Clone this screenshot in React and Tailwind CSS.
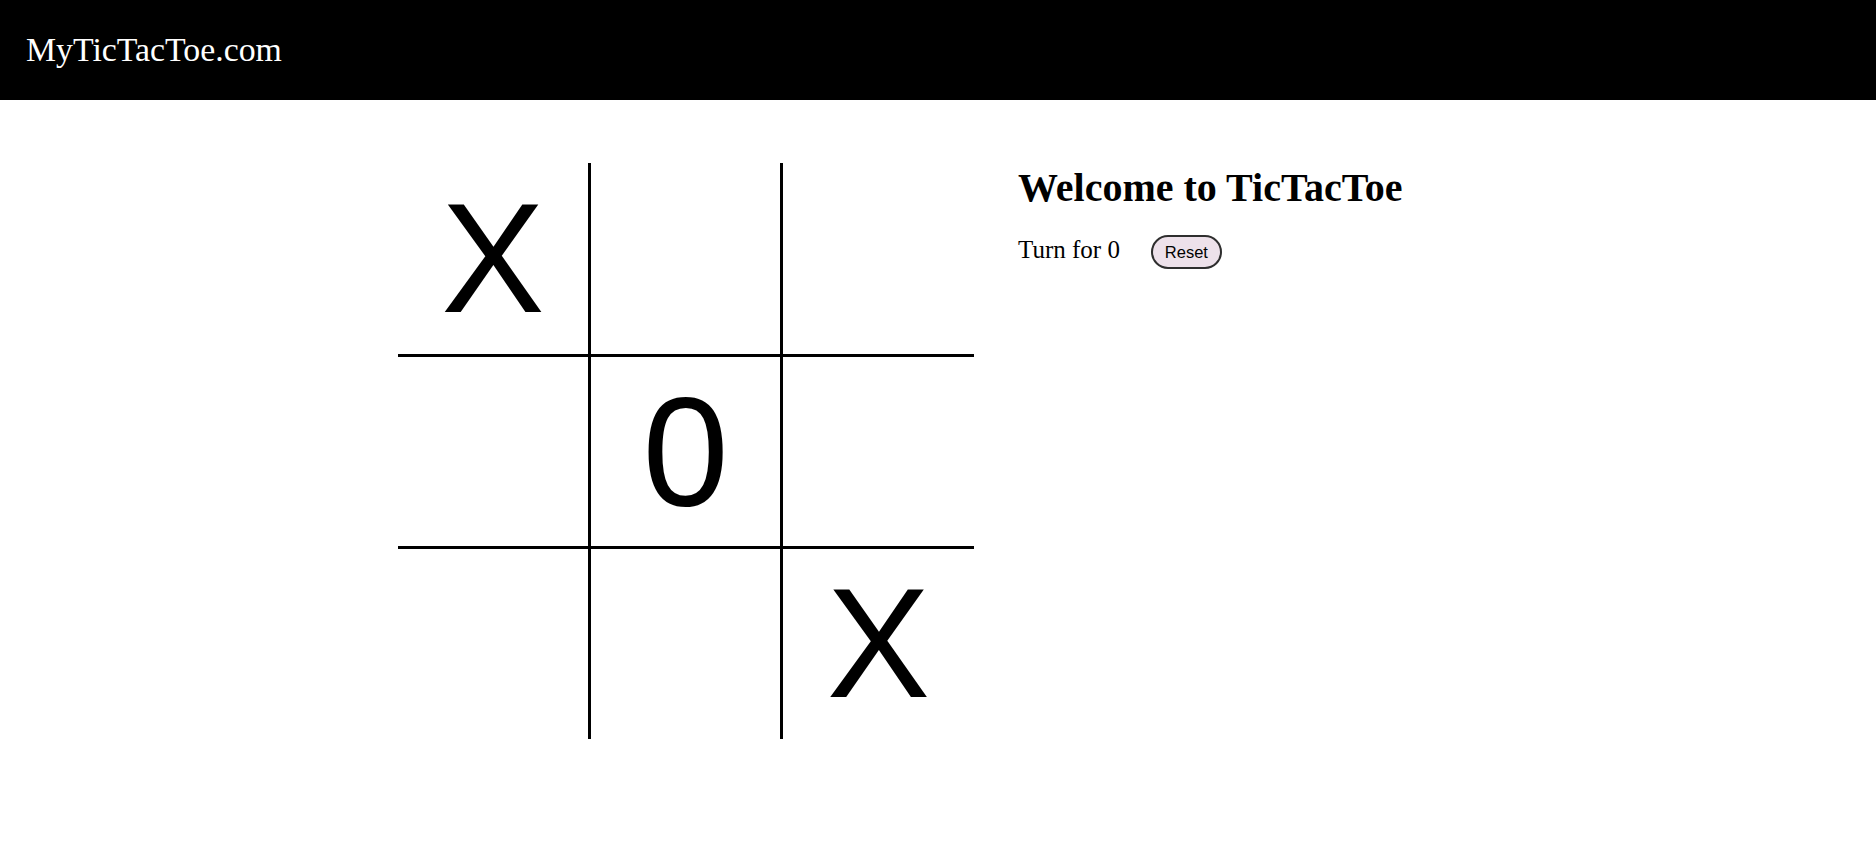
import { useState } from 'react';

const serif = "font-['Liberation_Serif','Times_New_Roman',serif]";
const sans = "font-['Liberation_Sans',Arial,sans-serif]";

const start = ['X', '', '', '', '0', '', '', '', 'X'];

// borders per cell: inner lines only
const cellBorder = [
  'border-r-[3px] border-b-[3px]',
  'border-r-[3px] border-b-[3px]',
  'border-b-[3px]',
  'border-r-[3px] border-b-[3px]',
  'border-r-[3px] border-b-[3px]',
  'border-b-[3px]',
  'border-r-[3px]',
  'border-r-[3px]',
  '',
];

export default function App() {
  const [cells, setCells] = useState(start);
  const [turn, setTurn] = useState('0');

  const play = (i) => {
    if (cells[i]) return;
    const next = [...cells];
    next[i] = turn;
    setCells(next);
    setTurn(turn === 'X' ? '0' : 'X');
  };

  const reset = () => {
    setCells(Array(9).fill(''));
    setTurn('X');
  };

  return (
    <div className="min-h-screen bg-white text-black">
      {/* Top bar */}
      <header className="h-[100px] bg-black flex items-center pl-[26px]">
        <span className={`${serif} text-[33.8px] text-white leading-[normal]`}>MyTicTacToe.com</span>
      </header>

      <main className="flex pl-[398px] pt-[63px] gap-[44px]">
        {/* Board */}
        <div className="grid grid-cols-[193px_192px_191px] grid-rows-[194px_192px_190px] shrink-0">
          {cells.map((v, i) => (
            <div
              key={i}
              onClick={() => play(i)}
              className={`${cellBorder[i]} border-black flex items-center justify-center cursor-pointer ${sans} text-[155px] leading-[normal]`}
            >
              {v}
            </div>
          ))}
        </div>

        {/* Side panel */}
        <div className="pt-[3px]">
          <h1 className={`${serif} text-[40px] font-bold leading-[43px]`}>Welcome to TicTacToe</h1>
          <div className="flex items-start mt-[26px] gap-[31px]">
            <span className={`${serif} text-[25px] leading-[30px]`}>Turn for {turn}</span>
            <button
              onClick={reset}
              className={`${sans} text-[16.5px] w-[71px] h-[34px] rounded-full border-2 border-[#2e2e2e] bg-[#ede1ea] flex items-center justify-center`}
            >
              Reset
            </button>
          </div>
        </div>
      </main>
    </div>
  );
}
